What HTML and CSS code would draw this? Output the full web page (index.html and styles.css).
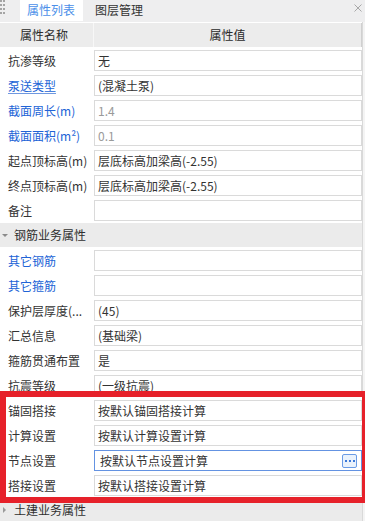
FILE: index.html
```html
<!DOCTYPE html>
<html lang="zh">
<head>
<meta charset="utf-8">
<link rel="stylesheet" href="styles.css">
</head>
<body>
<div class="panel">
  <div class="tabbar">
    <span class="grip"></span>
    <div class="tab active">属性列表</div>
    <div class="tab">图层管理</div>
    <svg class="close" width="8" height="8" viewBox="0 0 8 8"><path d="M0.5 0.5L7.5 7.5M7.5 0.5L0.5 7.5" stroke="#a8a8a8" stroke-width="1" fill="none"/></svg>
  </div>
  <div class="head">
    <div class="hname">属性名称</div>
    <div class="hval">属性值</div>
  </div>
  <div class="row"><div class="label">抗渗等级</div><div class="val">无</div></div>
  <div class="row"><div class="label link ul">泵送类型</div><div class="val">(混凝土泵)</div></div>
  <div class="row"><div class="label link">截面周长(m)</div><div class="val muted">1.4</div></div>
  <div class="row"><div class="label link">截面面积(m²)</div><div class="val muted">0.1</div></div>
  <div class="row"><div class="label">起点顶标高(m)</div><div class="val">层底标高加梁高(-2.55)</div></div>
  <div class="row"><div class="label">终点顶标高(m)</div><div class="val">层底标高加梁高(-2.55)</div></div>
  <div class="row"><div class="label">备注</div><div class="val"></div></div>
  <div class="group"><span class="tri down"></span>钢筋业务属性</div>
  <div class="row"><div class="label link">其它钢筋</div><div class="val"></div></div>
  <div class="row"><div class="label link">其它箍筋</div><div class="val"></div></div>
  <div class="row"><div class="label">保护层厚度(...</div><div class="val">(45)</div></div>
  <div class="row"><div class="label">汇总信息</div><div class="val">(基础梁)</div></div>
  <div class="row"><div class="label">箍筋贯通布置</div><div class="val">是</div></div>
  <div class="row"><div class="label">抗震等级</div><div class="val">(一级抗震)</div></div>
  <div class="row"><div class="label">锚固搭接</div><div class="val">按默认锚固搭接计算</div></div>
  <div class="row"><div class="label">计算设置</div><div class="val">按默认计算设置计算</div></div>
  <div class="row"><div class="label">节点设置</div><div class="val focus"><span class="txt">按默认节点设置计算</span><span class="more"><i></i><i></i><i></i></span></div></div>
  <div class="row"><div class="label">搭接设置</div><div class="val">按默认搭接设置计算</div></div>
  <div class="group"><span class="tri right"></span>土建业务属性</div>
</div>
<div class="mark"></div>
</body>
</html>
```
FILE: styles.css
```css
html, body {
  margin: 0;
  padding: 0;
}
body {
  width: 365px;
  height: 521px;
  overflow: hidden;
  position: relative;
  background: #f4f4f4;
  font-family: "Noto Sans CJK SC", "Microsoft YaHei", sans-serif;
  font-size: 12px;
  color: #333;
}
.panel {
  width: 362px;
  background: #fff;
  border-right: 1px solid #d9d9d9;
  height: 521px;
}
.tabbar {
  display: flex;
  align-items: stretch;
  height: 22px;
  background: #eeeeef;
  width: 365px;
}
.grip {
  width: 6px;
  height: 16px;
  margin-top: 0;
  background-image: radial-gradient(circle at 1px 1px, #a4a4a4 0.9px, transparent 1.1px);
  background-size: 3px 4px;
}
.tab {
  line-height: 20px;
  padding: 0 8px 0 7px;
  color: #333;
}
.tab.active {
  margin-left: 14px;
  background: #fff;
  color: #4b8fe9;
  height: 21px;
}
.tab + .tab {
  margin-left: 4px;
  padding-left: 8px;
}
.close {
  margin-left: auto;
  margin-right: 3px;
  margin-top: 4px;
}
.head {
  display: flex;
  margin-top: 1px;
  height: 24px;
  background: #ececec;
  border-bottom: 1px solid #fff;
  line-height: 24px;
  color: #2a2a2a;
}
.hname {
  width: 73px;
  padding-left: 20px;
  border-right: 1px solid #f7f7f7;
}
.hval {
  flex: 1;
  text-align: center;
  border-right: 1px solid #d0d0d0;
}
.row {
  display: flex;
  height: 25px;
  padding-top: 2px;
  box-sizing: border-box;
}
.label {
  width: 86px;
  padding-left: 8px;
  line-height: 21px;
  white-space: nowrap;
  overflow: hidden;
}
.label.link {
  color: #2163d6;
}
.label.ul span, .label.ul {
  text-decoration: underline;
  text-decoration-color: #6f98e0;
  text-underline-offset: 2px;
}
.val {
  width: 268px;
  height: 21px;
  box-sizing: border-box;
  border: 1px solid #dadada;
  padding-left: 3px;
  line-height: 19px;
  color: #333;
  white-space: nowrap;
  overflow: hidden;
}
.val.muted {
  color: #9a9a9a;
}
.val.focus {
  display: flex;
  align-items: center;
  border-color: #6493e2;
  padding-left: 5px;
  padding-right: 4px;
}
.val.focus .txt {
  flex: 1;
}
.more {
  width: 15px;
  height: 14px;
  box-sizing: border-box;
  border: 1px solid #6a9be6;
  border-radius: 2px;
  background: #eaf2fc;
  display: flex;
  align-items: center;
  justify-content: center;
  gap: 2px;
}
.more i {
  width: 2px;
  height: 2px;
  background: #3c78d8;
}
.group {
  display: flex;
  align-items: center;
  height: 24px;
  margin-bottom: 1px;
  background: #ebebeb;
  padding-left: 14px;
  position: relative;
  color: #2f2f2f;
  line-height: 24px;
}
.tri {
  position: absolute;
  width: 0;
  height: 0;
}
.tri.down {
  left: 2px;
  top: 11px;
  border-left: 3px solid transparent;
  border-right: 3px solid transparent;
  border-top: 3px solid #8a8a8a;
}
.tri.right {
  left: 3px;
  top: 9px;
  border-top: 3px solid transparent;
  border-bottom: 3px solid transparent;
  border-left: 3px solid #9a9a9a;
}
.mark {
  position: absolute;
  left: 0;
  top: 391px;
  width: 365px;
  height: 112px;
  box-sizing: border-box;
  border: 6px solid #e6212a;
  border-right-width: 3px;
}
```
